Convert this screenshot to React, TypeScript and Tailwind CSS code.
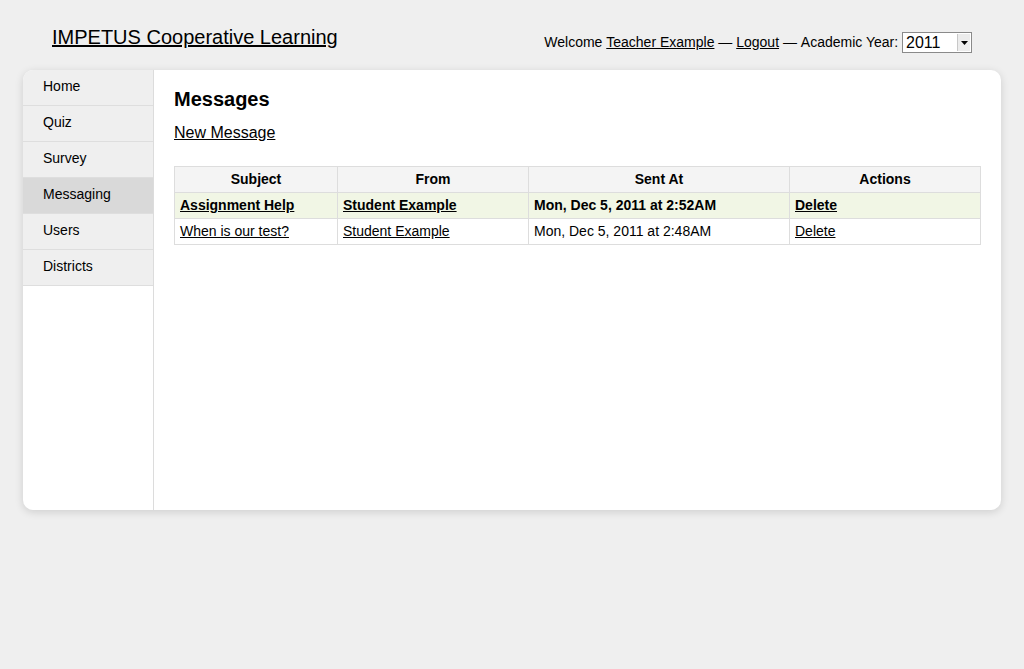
import { useState } from 'react';

type Mensaje = {
  id: number;
  asunto: string;
  de: string;
  enviado: string;
  leido: boolean;
};

const menu = ['Home', 'Quiz', 'Survey', 'Messaging', 'Users', 'Districts'];

const mensajes: Mensaje[] = [
  { id: 1, asunto: 'Assignment Help', de: 'Student Example', enviado: 'Mon, Dec 5, 2011 at 2:52AM', leido: false },
  { id: 2, asunto: 'When is our test?', de: 'Student Example', enviado: 'Mon, Dec 5, 2011 at 2:48AM', leido: true },
];

export default function App() {
  const [activo, setActivo] = useState('Messaging');

  return (
    <div
      className="min-h-[669px] bg-[#efefef] px-[23px] text-black"
      style={{ fontFamily: '"Liberation Sans", Arial, sans-serif' }}
    >
      {/* Cabecera */}
      <div className="flex h-[70px] items-start justify-between">
        <a href="#" className="ml-[29px] mt-[25px] text-[20px] leading-[24px] underline">
          IMPETUS Cooperative Learning
        </a>
        <div className="mr-[29px] mt-[32px] flex items-center text-[14px]">
          <span>Welcome&nbsp;</span>
          <a href="#" className="underline">Teacher Example</a>
          <span>&nbsp;—&nbsp;</span>
          <a href="#" className="underline">Logout</a>
          <span>&nbsp;—&nbsp;Academic Year:&nbsp;</span>
          <div className="flex h-[21px] w-[70px] items-center border border-[#8a8a8a] bg-white">
            <span className="flex-1 pl-[3px] text-[16px] leading-none">2011</span>
            <div className="mr-[1px] flex h-[17px] w-[13px] items-center justify-center border-l border-[#c8c8c8] bg-[#ececec]">
              <svg width="7" height="4" viewBox="0 0 7 4">
                <path d="M0 0h7L3.5 4z" fill="#000" />
              </svg>
            </div>
          </div>
        </div>
      </div>

      {/* Tarjeta principal */}
      <div className="flex h-[440px] overflow-hidden rounded-[10px] bg-white shadow-[0_2px_8px_rgba(0,0,0,0.14)]">
        <div className="w-[131px] shrink-0 border-r border-[#dcdcdc]">
          {menu.map((item) => (
            <div
              key={item}
              onClick={() => setActivo(item)}
              className={`h-[36px] cursor-pointer border-b border-[#dedede] pl-[20px] text-[14px] leading-[33px] ${
                activo === item ? 'bg-[#d9d9d9]' : 'bg-[#efefef]'
              }`}
            >
              {item}
            </div>
          ))}
        </div>

        <div className="flex-1 pl-[20px] pr-[20px] pt-[18px]">
          <h2 className="text-[20px] font-bold leading-[23px]">Messages</h2>
          <a href="#" className="mt-[13px] inline-block text-[16px] leading-[18px] underline">
            New Message
          </a>

          <table className="mt-[21px] w-full border-collapse text-[14px]">
            <colgroup>
              <col className="w-[163px]" />
              <col className="w-[191px]" />
              <col className="w-[261px]" />
              <col />
            </colgroup>
            <thead>
              <tr className="bg-[#f4f4f4]">
                {['Subject', 'From', 'Sent At', 'Actions'].map((h) => (
                  <th key={h} className="h-[26px] border border-[#dddddd] p-0 text-center font-bold">
                    {h}
                  </th>
                ))}
              </tr>
            </thead>
            <tbody>
              {mensajes.map((m) => (
                <tr key={m.id} className={m.leido ? 'bg-white' : 'bg-[#f1f6e5] font-bold'}>
                  <td className="h-[26px] border border-[#dddddd] px-[5px] py-0">
                    <a href="#" className="underline">{m.asunto}</a>
                  </td>
                  <td className="h-[26px] border border-[#dddddd] px-[5px] py-0">
                    <a href="#" className="underline">{m.de}</a>
                  </td>
                  <td className="h-[26px] border border-[#dddddd] px-[5px] py-0">{m.enviado}</td>
                  <td className="h-[26px] border border-[#dddddd] px-[5px] py-0">
                    <a href="#" className="underline">Delete</a>
                  </td>
                </tr>
              ))}
            </tbody>
          </table>
        </div>
      </div>
    </div>
  );
}
